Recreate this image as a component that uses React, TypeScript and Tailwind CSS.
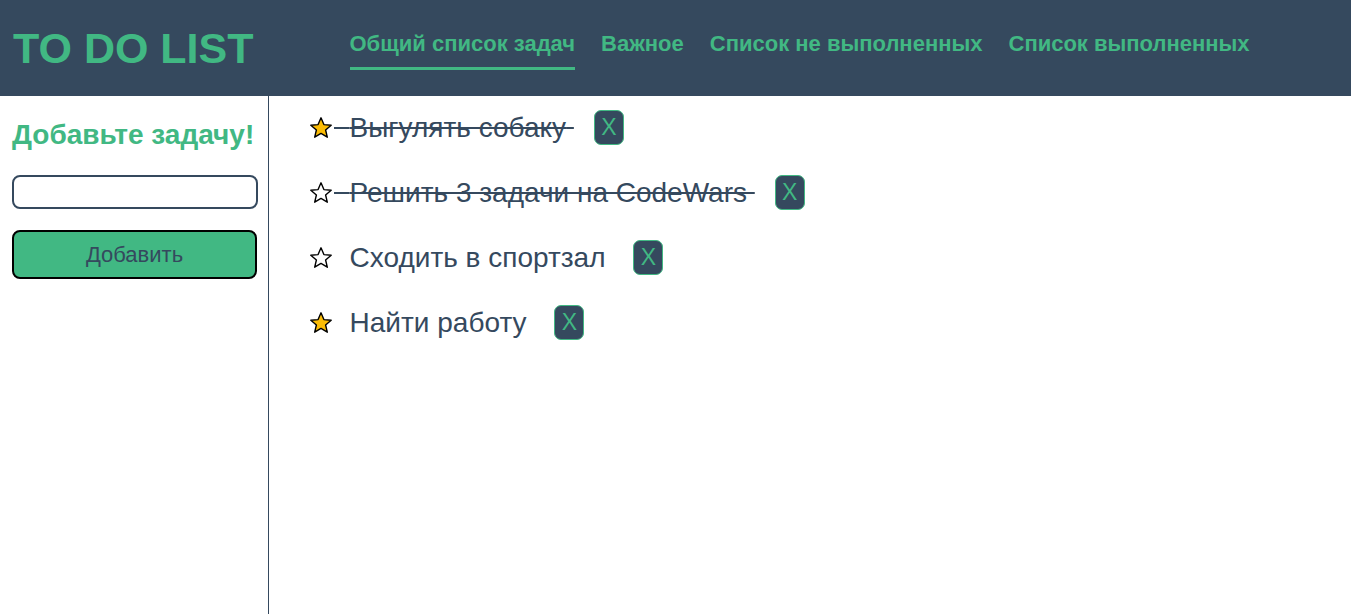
import React from 'react';

type Task = { id: number; title: string; done: boolean; important: boolean };

const tasks: Task[] = [
  { id: 1, title: 'Выгулять собаку', done: true, important: true },
  { id: 2, title: 'Решить 3 задачи на CodeWars', done: true, important: false },
  { id: 3, title: 'Сходить в спортзал', done: false, important: false },
  { id: 4, title: 'Найти работу', done: false, important: true },
];

const tabs = ['Общий список задач', 'Важное', 'Список не выполненных', 'Список выполненных'];

const Star = ({ filled }: { filled: boolean }) => (
  <svg width="24" height="24" viewBox="0 0 24 24" className="shrink-0">
    <polygon
      points="12,1.8 14.9,8.6 22.2,9.2 16.6,14 18.3,21.2 12,17.4 5.7,21.2 7.4,14 1.8,9.2 9.1,8.6"
      fill={filled ? '#fbbc05' : '#ffffff'}
      stroke="#000000"
      strokeWidth="1.4"
      strokeLinejoin="round"
    />
  </svg>
);

export default function App() {
  return (
    <div className="min-h-[614px] flex flex-col font-['Liberation_Sans',Arial,sans-serif]">
      {/* Header */}
      <header className="h-[96px] bg-[#35495e] flex items-center px-[13px]">
        <h1 className="text-[43px] font-bold text-[#41b883] leading-none">TO DO LIST</h1>
        <nav className="ml-[96px] flex gap-[26px] text-[22px] font-bold text-[#41b883]">
          {tabs.map((t, i) => (
            <span
              key={t}
              className={`pt-[4px] pb-[10px] border-b-[3px] leading-[26px] ${i === 0 ? 'border-[#41b883]' : 'border-transparent'}`}
            >
              {t}
            </span>
          ))}
        </nav>
      </header>

      <div className="flex flex-1">
        {/* Sidebar */}
        <aside className="w-[269px] border-r border-[#35495e] px-[12px] pt-[24px] min-h-[518px]">
          <h2 className="text-[28px] font-bold text-[#41b883] whitespace-nowrap leading-[30px]">Добавьте задачу!</h2>
          <input
            type="text"
            className="mt-[25px] block w-[246px] h-[34px] border-2 border-[#35495e] rounded-[8px] outline-none"
          />
          <button className="mt-[21px] block w-[245px] h-[49px] bg-[#41b883] border-2 border-black rounded-[8px] text-[22px] text-[#35495e]">
            Добавить
          </button>
        </aside>

        {/* Task list */}
        <main className="flex-1 pl-[40px] pt-[14px]">
          <ul className="flex flex-col">
            {tasks.map((task) => (
              <li key={task.id} className="h-[65px] flex items-center">
                <div className="flex items-center -mt-[30px]">
                  <Star filled={task.important} />
                  <span
                    className={`ml-[1px] text-[28px] text-[#35495e] whitespace-pre ${task.done ? 'line-through' : ''}`}
                  >
                    {'  '}
                    {task.title}{' '}
                  </span>
                  <button className="ml-[20px] w-[30px] h-[35px] bg-[#35495e] border border-[#41b883] rounded-[7px] text-[23px] text-[#41b883] leading-none">
                    X
                  </button>
                </div>
              </li>
            ))}
          </ul>
        </main>
      </div>
    </div>
  );
}
